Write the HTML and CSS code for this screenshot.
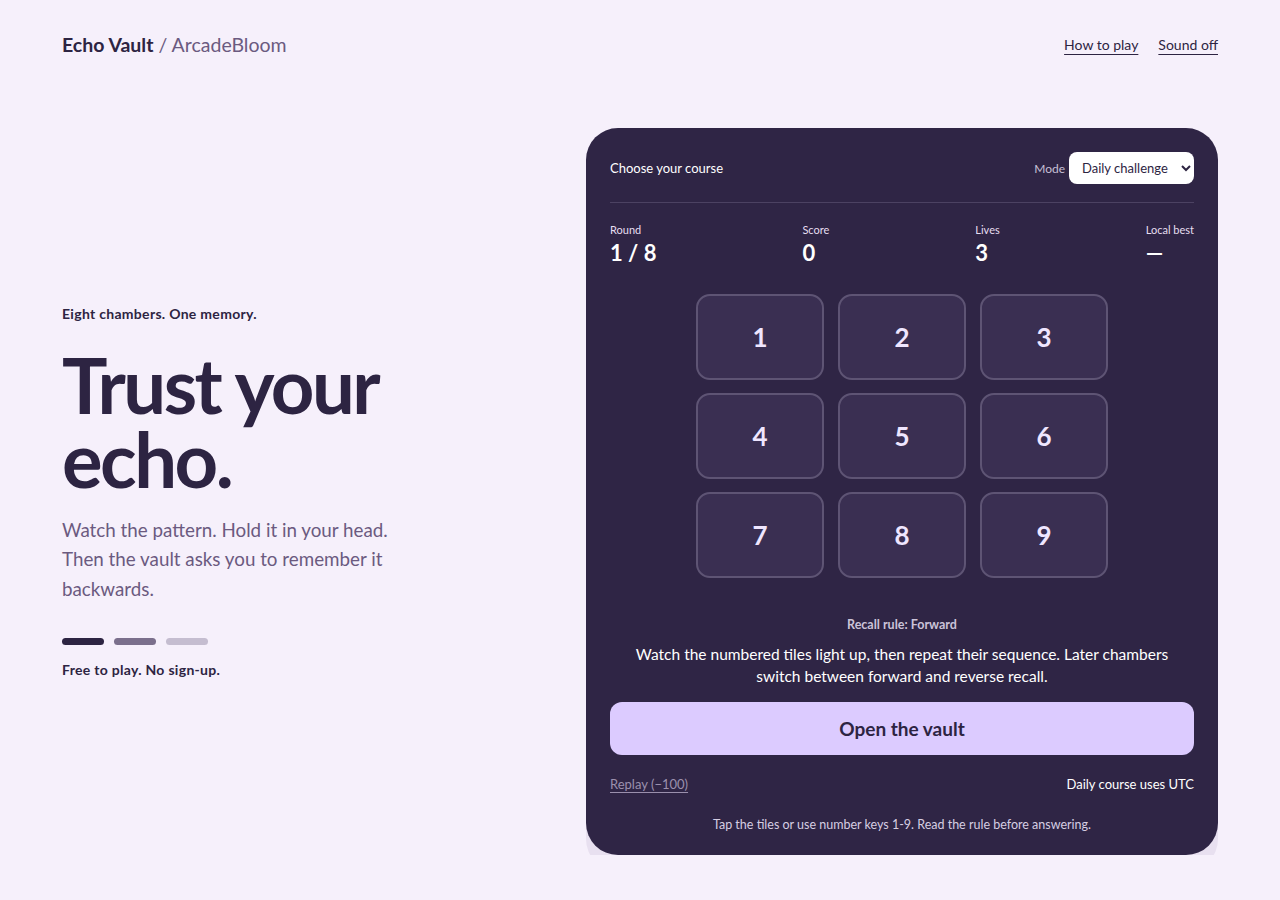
FILE: index.html
```html
<!DOCTYPE html>
<html lang="en">
<head>
<meta charset="utf-8">
<title>Echo Vault / ArcadeBloom</title>
<link rel="stylesheet" href="styles.css">
</head>
<body>
<div class="page">
  <header class="topbar">
    <div class="brand"><strong>Echo Vault</strong> <span class="sub">/ ArcadeBloom</span></div>
    <nav class="nav">
      <a href="#">How to play</a>
      <a href="#">Sound off</a>
    </nav>
  </header>

  <main class="main">
    <section class="hero">
      <p class="eyebrow">Eight chambers. One memory.</p>
      <h1 class="title">Trust your echo.</h1>
      <p class="lead">Watch the pattern. Hold it in your head. Then the vault asks you to remember it backwards.</p>
      <div class="dots">
        <span class="dot d1"></span>
        <span class="dot d2"></span>
        <span class="dot d3"></span>
      </div>
      <p class="free">Free to play. No sign-up.</p>
    </section>

    <section class="card">
      <div class="card-head">
        <span class="course">Choose your course</span>
        <label class="mode">Mode
          <select class="select">
            <option>Daily challenge</option>
            <option>Endless</option>
          </select>
        </label>
      </div>

      <div class="stats">
        <div class="stat"><span class="lbl">Round</span><span class="val">1 / 8</span></div>
        <div class="stat"><span class="lbl">Score</span><span class="val">0</span></div>
        <div class="stat"><span class="lbl">Lives</span><span class="val">3</span></div>
        <div class="stat right"><span class="lbl">Local best</span><span class="val">—</span></div>
      </div>

      <div class="grid">
        <button class="tile">1</button>
        <button class="tile">2</button>
        <button class="tile">3</button>
        <button class="tile">4</button>
        <button class="tile">5</button>
        <button class="tile">6</button>
        <button class="tile">7</button>
        <button class="tile">8</button>
        <button class="tile">9</button>
      </div>

      <p class="rule">Recall rule: Forward</p>
      <p class="desc">Watch the numbered tiles light up, then repeat their sequence. Later chambers switch between forward and reverse recall.</p>
      <button class="open">Open the vault</button>
      <div class="card-foot">
        <a class="replay" href="#">Replay (−100)</a>
        <span class="utc">Daily course uses UTC</span>
      </div>
      <p class="hint">Tap the tiles or use number keys 1-9. Read the rule before answering.</p>
    </section>
  </main>
</div>
</body>
</html>
```

FILE: styles.css
```css
* { box-sizing: border-box; }
html, body { margin: 0; padding: 0; }
body {
  background: #f6f0fb;
  color: #2d2442;
  font-family: "Trebuchet MS", Lato, "DejaVu Sans", sans-serif;
}
.page {
  padding: 0 62px;
}
.topbar {
  display: flex;
  justify-content: space-between;
  align-items: center;
  height: 89px;
}
.brand { font-size: 19.5px; }
.brand strong { font-weight: 700; color: #2d2442; }
.brand .sub { color: #6b5a80; }
.nav { display: flex; gap: 20px; font-size: 14px; }
.nav a { color: #2d2442; text-decoration: underline; text-underline-offset: 4px; }

.main {
  display: flex;
  justify-content: space-between;
  align-items: center;
  padding-top: 39px;
}
.hero { width: 360px; }
.eyebrow { margin: 0 0 26px; font-size: 14px; font-weight: 700; letter-spacing: 0.3px; }
.title {
  margin: 0;
  font-size: 76px;
  line-height: 0.98;
  letter-spacing: -2.5px;
  font-weight: 700;
  color: #2d2442;
}
.lead {
  margin: 18px 0 0;
  font-size: 18.8px;
  line-height: 29.5px;
  color: #6b5a80;
  width: 345px;
}
.dots { display: flex; gap: 10px; margin-top: 35px; }
.dot { width: 42px; height: 7px; border-radius: 4px; }
.d1 { background: #2d2442; }
.d2 { background: #7b6f8c; }
.d3 { background: #c5bdd0; }
.free { margin: 16px 0 0; font-size: 14px; font-weight: 700; letter-spacing: 0.3px; }

.card {
  width: 632px;
  background: #2f2545;
  border-radius: 32px;
  padding: 24px 24px 23px;
  color: #ffffff;
  box-shadow: 0 16px 0 #e8e0f0;
}
.card-head {
  display: flex;
  justify-content: space-between;
  align-items: center;
  padding-bottom: 18px;
  border-bottom: 1px solid #4c4262;
}
.course { font-size: 13px; }
.mode { font-size: 12px; color: #c8c0d6; display: flex; align-items: center; gap: 4px; }
.select {
  height: 32px;
  width: 125px;
  border: none;
  border-radius: 8px;
  background: #ffffff;
  color: #2d2442;
  font-family: inherit;
  font-size: 13px;
  padding: 0 6px 0 9px;
}
.stats {
  display: flex;
  justify-content: space-between;
  padding-top: 20px;
}
.stat { display: flex; flex-direction: column; gap: 3px; }
.stat.right { align-items: flex-start; }
.lbl { font-size: 11px; color: #e6def0; }
.val { font-size: 22px; font-weight: 700; color: #ffffff; }

.grid {
  display: grid;
  grid-template-columns: repeat(3, 128px);
  grid-auto-rows: 86px;
  gap: 13px 14px;
  justify-content: center;
  margin-top: 28px;
}
.tile {
  background: #3a2f52;
  border: 2px solid #5e5474;
  border-radius: 14px;
  color: #efe6ff;
  font-family: inherit;
  font-size: 26px;
  font-weight: 700;
}

.rule {
  margin: 39px 0 0;
  text-align: center;
  font-size: 12.5px;
  font-weight: 700;
  color: #cbc3d8;
}
.desc {
  margin: 11px 0 0;
  padding: 0 20px;
  text-align: center;
  font-size: 15.5px;
  line-height: 22px;
  color: #ffffff;
}
.open {
  display: block;
  width: 100%;
  height: 53px;
  margin-top: 15px;
  border: none;
  border-radius: 12px;
  background: #dccbff;
  color: #2d2442;
  font-family: inherit;
  font-size: 19px;
  font-weight: 700;
}
.card-foot {
  display: flex;
  justify-content: space-between;
  align-items: center;
  margin-top: 21px;
}
.replay { font-size: 13px; color: #9b90ad; text-decoration: underline; text-underline-offset: 3px; }
.utc { font-size: 13px; color: #ffffff; }
.hint {
  margin: 25px 0 0;
  text-align: center;
  font-size: 12.5px;
  color: #d6cee2;
}
```
